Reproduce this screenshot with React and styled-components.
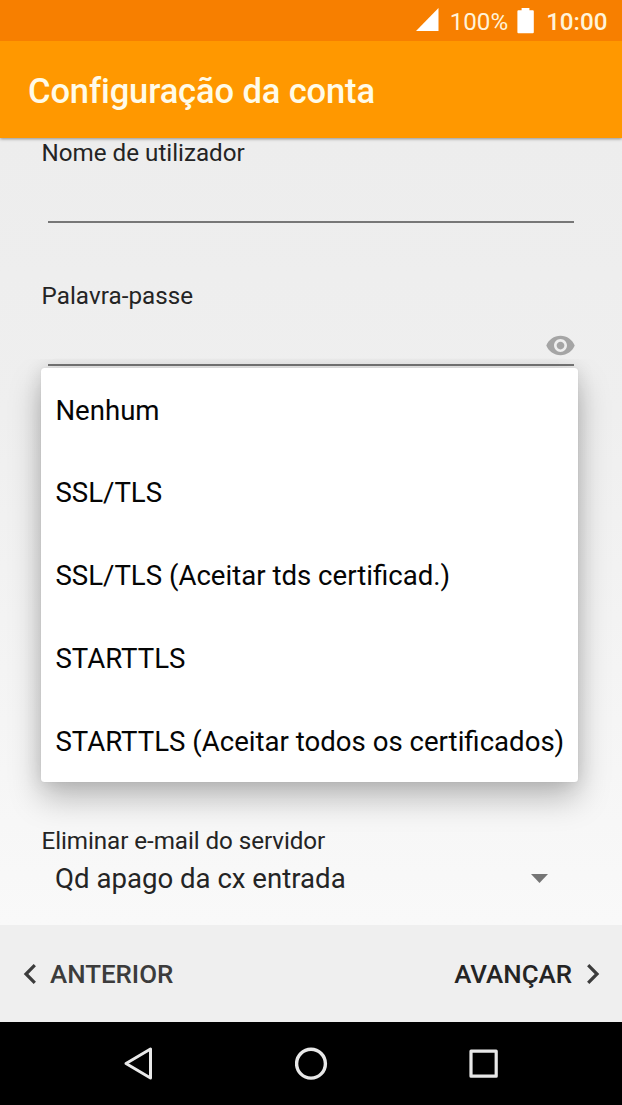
import React from "react";
import styled, { createGlobalStyle } from "styled-components";

const Global = createGlobalStyle`
  * { box-sizing: border-box; }
  body { margin: 0; font-family: Roboto, "Noto Sans", sans-serif; background: #000; }
`;

const Screen = styled.div`
  width: 622px;
  height: 1105px;
  display: flex;
  flex-direction: column;
  overflow: hidden;
`;

const StatusBar = styled.div`
  height: 41px;
  flex: none;
  padding: 0 14.5px 0 0;
  display: flex;
  align-items: flex-start;
  justify-content: flex-end;
  background: #f77f00;
  color: #fff3d9;
  svg { display: block; flex: none; }
`;

const BatteryIcon = styled.svg`
  margin-left: 8.5px;
`;

const StatusText = styled.span`
  font-size: 24.2px;
  line-height: 41px;
  white-space: nowrap;
  padding-top: 2px;
  font-weight: ${(p) => p.$weight || 400};
  margin-left: ${(p) => p.$gap}px;
`;

const AppBar = styled.header`
  height: 97px;
  flex: none;
  display: flex;
  align-items: center;
  padding: 3px 28px 0;
  background: #ff9800;
  box-shadow: 0 1px 3px rgba(0, 0, 0, 0.4);
  clip-path: inset(0 0 -6px 0);
  z-index: 1;
`;

const Title = styled.h1`
  margin: 0;
  font-size: 34.5px;
  font-weight: 500;
  line-height: 40px;
  color: #fffbe8;
  letter-spacing: -0.12px;
`;

const Form = styled.main`
  position: relative;
  flex: 1;
  padding: 1px 42px 0 41.5px;
  background: linear-gradient(#ededed, #efefef 35%, #f9f9f9);
`;

const Field = styled.div`
  height: ${(p) => p.$height}px;
  display: flex;
  flex-direction: column;
`;

const Label = styled.label`
  font-size: 24.2px;
  line-height: 28px;
  color: #242424;
  white-space: nowrap;
  letter-spacing: ${(p) => p.$track || 0}px;
`;

const Input = styled.div`
  height: 56px;
  margin: 0 6px 0 6.5px;
  border-bottom: 2px solid #777;
  display: flex;
  justify-content: flex-end;
  align-items: flex-end;
  padding-bottom: 3px;
  svg { display: block; margin-right: -1.5px; }
`;

const Spinner = styled.div`
  height: 46px;
  padding: 0 32.5px 0 13.5px;
  display: flex;
  align-items: center;
  justify-content: space-between;
  font-size: 27.6px;
  color: #242424;
`;

const Menu = styled.ul`
  position: absolute;
  left: 41.4px;
  top: 229.8px;
  width: 537px;
  margin: 0;
  padding: 0;
  list-style: none;
  background: #fff;
  border-radius: 3.5px;
  box-shadow: 0 16px 32px rgba(0, 0, 0, 0.25), 0 0 18px rgba(0, 0, 0, 0.1), 0 0 2px rgba(0, 0, 0, 0.06);
  clip-path: inset(-9px -42px -70px -42px);
`;

const MenuItem = styled.li`
  height: 82.8px;
  padding: 2px 14px 0;
  display: flex;
  align-items: center;
  font-size: 27.6px;
  color: #050505;
  white-space: nowrap;
`;

const Footer = styled.footer`
  height: 97px;
  flex: none;
  display: flex;
  justify-content: space-between;
  align-items: center;
  padding: 0 21.5px;
  background: #efefef;
`;

const StepButton = styled.button`
  border: 0;
  padding: 1px 0 0;
  background: none;
  display: flex;
  align-items: center;
  gap: 13.5px;
  font: 500 25.9px/30px Roboto, sans-serif;
  color: ${(p) => p.$color};
  svg { display: block; }
`;

const NavBar = styled.nav`
  height: 83px;
  flex: none;
  display: flex;
  align-items: center;
  padding-left: 122px;
  gap: 140px;
  background: #000;
  svg { display: block; }
`;

const items = [
  "Nenhum",
  "SSL/TLS",
  "SSL/TLS (Aceitar tds certificad.)",
  "STARTTLS",
  "STARTTLS (Aceitar todos os certificados)",
];

export default function App() {
  return (
    <>
      <Global />
      <Screen>
        <StatusBar>
          <svg width="24" height="41" viewBox="0 0 24 41">
            <path d="M22.500 8v23H0z" fill="#fff" />
          </svg>
          <StatusText $gap={9.5}>100%</StatusText>
          <BatteryIcon width="17" height="41" viewBox="0 0 17 41">
            <path d="M4.600 8h7.800v2.200h3.400q1 0 1 1v21q0 1-1 1H1.400q-1 0-1-1v-21q0-1 1-1h3.200z" fill="#fff" />
          </BatteryIcon>
          <StatusText $gap={12.5} $weight={500}>10:00</StatusText>
        </StatusBar>
        <AppBar>
          <Title>Configuração da conta</Title>
        </AppBar>
        <Form>
          <Field $height={143}>
            <Label>Nome de utilizador</Label>
            <Input />
          </Field>
          <Field $height={545}>
            <Label $track={0.06}>Palavra-passe</Label>
            <Input>
              <svg width="31" height="31" viewBox="0 0 24 24" fill="#a5a5a5">
                <path d="M12 4.500C7 4.500 2.730 7.610 1 12c1.730 4.390 6 7.500 11 7.500s9.270-3.110 11-7.500c-1.730-4.390-6-7.500-11-7.500zM12 17c-2.760 0-5-2.240-5-5s2.240-5 5-5 5 2.240 5 5-2.240 5-5 5zm0-8c-1.660 0-3 1.340-3 3s1.340 3 3 3 3-1.340 3-3-1.340-3-3-3z" />
              </svg>
            </Input>
          </Field>
          <Field $height={80}>
            <Label $track={-0.06}>Eliminar e-mail do servidor</Label>
            <Spinner>
              Qd apago da cx entrada
              <svg width="17" height="9" viewBox="0 0 17 9">
                <path d="M0 0h17L8.500 9z" fill="#757575" />
              </svg>
            </Spinner>
          </Field>
          <Menu>
            {items.map((text) => (
              <MenuItem key={text}>{text}</MenuItem>
            ))}
          </Menu>
        </Form>
        <Footer>
          <StepButton $color="#3c3c3c">
            <svg width="15" height="20" viewBox="0 0 15 20" fill="none" stroke="#3c3c3c" strokeWidth="3.2">
              <path d="M12.800 1.200L4 10l8.800 8.800" />
            </svg>
            ANTERIOR
          </StepButton>
          <StepButton $color="#242424">
            AVANÇAR
            <svg width="15" height="20" viewBox="0 0 15 20" fill="none" stroke="#3c3c3c" strokeWidth="3.2">
              <path d="M2.200 1.200L11 10l-8.800 8.800" />
            </svg>
          </StepButton>
        </Footer>
        <NavBar>
          <svg width="33" height="36" viewBox="0 0 33 36" fill="none" stroke="#e8e8e8" strokeWidth="3" strokeLinejoin="round">
            <path d="M28.500 3v29L4 17.500z" />
          </svg>
          <svg width="33" height="36" viewBox="0 0 33 36" fill="none" stroke="#e8e8e8" strokeWidth="3.4">
            <circle cx="16" cy="17.700" r="14.400" />
          </svg>
          <svg width="33" height="36" viewBox="0 0 33 36" fill="none" stroke="#e8e8e8" strokeWidth="3.200" strokeLinejoin="round">
            <path d="M3 5.200h25.200v25H3z" />
          </svg>
        </NavBar>
      </Screen>
    </>
  );
}
